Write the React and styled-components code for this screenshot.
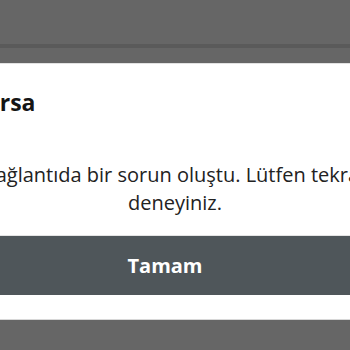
import styled, { createGlobalStyle } from "styled-components";

const GlobalStyle = createGlobalStyle`
  html, body {
    margin: 0;
    padding: 0;
    width: 350px;
    height: 350px;
    overflow: hidden;
    background: #666666;
  }
`;

const Screen = styled.div`
  width: 350px;
  height: 350px;
  display: flex;
  flex-direction: column;
  background: #666666;
  font-family: "Open Sans", Lato, sans-serif;
`;

const HeaderShade = styled.div`
  height: 44px;
  flex-shrink: 0;
  border-bottom: 4px solid #5a5a5a;
  margin-bottom: 15px;
`;

const Center = styled.div`
  display: flex;
  justify-content: center;
`;

const Dialog = styled.div`
  flex-shrink: 0;
  width: 458px;
  background: #ffffff;
  border-top: 1px solid #e2e2e2;
  border-bottom: 1px solid #d8d8d8;
  padding-bottom: 24px;
`;

const Title = styled.h2`
  margin: 0;
  padding: 23px 24px 0;
  font-size: 23px;
  font-weight: 700;
  line-height: 30px;
  color: #151515;
`;

const Message = styled.p`
  margin: 0;
  padding: 44px 24px 18px;
  font-size: 20px;
  line-height: 28px;
  text-align: center;
  color: #222222;
`;

const ActionButton = styled.button`
  display: block;
  width: 100%;
  height: 60px;
  border: none;
  border-top: 1px solid #e4e4e4;
  padding: 0 20px 0 0;
  background: #4f565a;
  color: #ffffff;
  font-family: inherit;
  font-size: 20px;
  font-weight: 700;
  cursor: pointer;
`;

export default function App() {
  return (
    <Screen>
      <GlobalStyle />
      <HeaderShade />
      <Center>
        <Dialog>
          <Title>Borsa</Title>
          <Message>
            Bağlantıda bir sorun oluştu. Lütfen tekrar deneyiniz.
          </Message>
          <ActionButton>Tamam</ActionButton>
        </Dialog>
      </Center>
    </Screen>
  );
}
